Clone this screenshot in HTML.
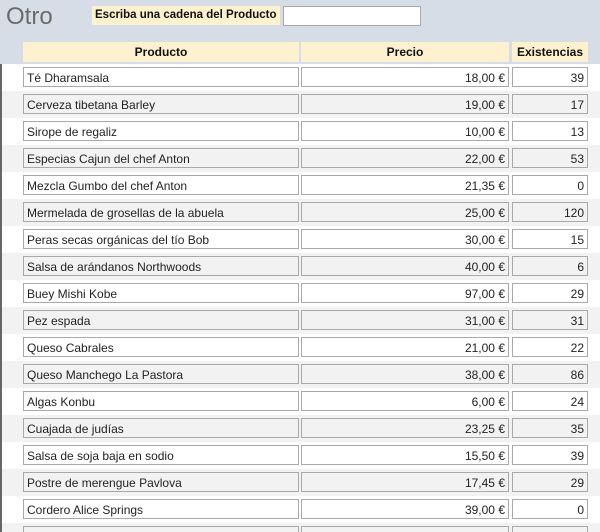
<!DOCTYPE html>
<html style="margin:0;width:600px;height:532px;overflow:hidden"><head><meta charset="utf-8"><style>
body{margin:0;width:600px;height:532px;overflow:hidden;background:#fff;font-family:"Liberation Sans",sans-serif;font-size:12px;color:#222;position:relative}
.top{position:absolute;left:0;top:0;width:600px;height:64px;background:#d7dde7}
.title{position:absolute;left:6px;top:3px;font-size:24px;color:#6b6b6b}
.lbl{position:absolute;left:92px;top:6px;height:19px;line-height:19px;background:#fdf1cf;font-weight:bold;font-size:11.5px;padding:0 3px;color:#111}
.inp{position:absolute;left:283px;top:6px;width:136px;height:18px;background:#fff;border:1px solid #a8a8a8}
.h{position:absolute;top:42px;height:20px;line-height:20px;background:#fdf1cf;font-weight:bold;text-align:center;font-size:12px;color:#111}
.row{position:absolute;left:0;width:600px;height:27px}
.row.alt{background:#f2f2f2}
.b{position:absolute;top:3px;height:20px;line-height:20px;border:1px solid #a9a9a9;background:#fff;box-sizing:border-box;padding:0 3px;white-space:nowrap}
.alt .b{background:#f2f2f2}
.r{text-align:right}
.sel{position:absolute;left:0;top:64px;width:2px;height:468px;background:#666}
</style></head><body>
<div class="top"><div class="title">Otro</div><div class="lbl">Escriba una cadena del Producto</div><div class="inp"></div>
<div class="h" style="left:23px;width:276px">Producto</div>
<div class="h" style="left:301px;width:208px">Precio</div>
<div class="h" style="left:512px;width:76px">Existencias</div></div>
<div id="rows"></div>
<script>
var d=[["Té Dharamsala","18,00 €",39],["Cerveza tibetana Barley","19,00 €",17],["Sirope de regaliz","10,00 €",13],["Especias Cajun del chef Anton","22,00 €",53],["Mezcla Gumbo del chef Anton","21,35 €",0],["Mermelada de grosellas de la abuela","25,00 €",120],["Peras secas orgánicas del tío Bob","30,00 €",15],["Salsa de arándanos Northwoods","40,00 €",6],["Buey Mishi Kobe","97,00 €",29],["Pez espada","31,00 €",31],["Queso Cabrales","21,00 €",22],["Queso Manchego La Pastora","38,00 €",86],["Algas Konbu","6,00 €",24],["Cuajada de judías","23,25 €",35],["Salsa de soja baja en sodio","15,50 €",39],["Postre de merengue Pavlova","17,45 €",29],["Cordero Alice Springs","39,00 €",0],["","",""]];
var h="";d.forEach(function(r,i){h+='<div class="row'+(i%2?' alt':'')+'" style="top:'+(64+27*i)+'px"><div class="b" style="left:23px;width:276px">'+r[0]+'</div><div class="b r" style="left:301px;width:208px">'+r[1]+'</div><div class="b r" style="left:512px;width:76px">'+r[2]+'</div></div>';});
document.getElementById("rows").innerHTML=h;
</script>
<div class="sel"></div>
</body></html>
